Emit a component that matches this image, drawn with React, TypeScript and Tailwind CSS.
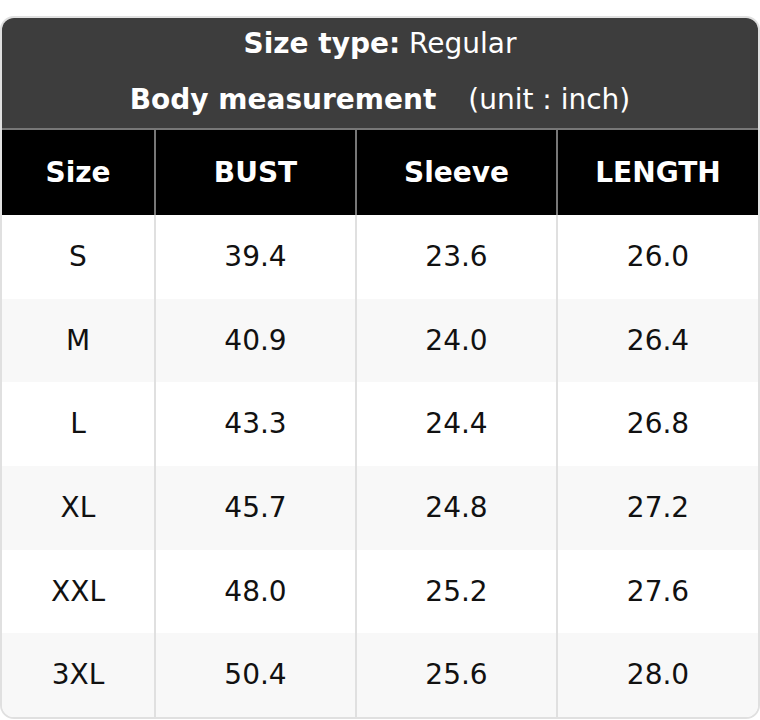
import React from "react";

const rows = [
  ["S", "39.4", "23.6", "26.0"],
  ["M", "40.9", "24.0", "26.4"],
  ["L", "43.3", "24.4", "26.8"],
  ["XL", "45.7", "24.8", "27.2"],
  ["XXL", "48.0", "25.2", "27.6"],
  ["3XL", "50.4", "25.6", "28.0"],
];

export default function App() {
  return (
    <div
      className="w-[760px] h-[720px] bg-white pt-4"
      style={{ fontFamily: '"DejaVu Sans", Verdana, sans-serif' }}
    >
      <div className="h-[703px] rounded-[14px] overflow-hidden border-2 border-[#e0e0e0] flex flex-col">
        <div className="bg-[#3d3d3d] text-white text-[28px] h-[112px] flex flex-col items-center border-b-2 border-[#777]">
          <div className="mt-[10px] leading-[32px]">
            <span className="font-bold">Size type:</span> Regular
          </div>
          <div className="mt-[24px] leading-[32px]">
            <span className="font-bold">Body measurement</span>
            <span className="ml-[32px]">(unit : inch)</span>
          </div>
        </div>
        <div className="flex h-[85px] bg-black text-white font-bold text-[28px]">
          <div className="w-[154px] flex items-center justify-center border-r-2 border-[#777]">Size</div>
          <div className="w-[201px] flex items-center justify-center border-r-2 border-[#777]">BUST</div>
          <div className="w-[201px] flex items-center justify-center border-r-2 border-[#777]">Sleeve</div>
          <div className="flex-1 flex items-center justify-center">LENGTH</div>
        </div>
        {rows.map((r, i) => (
          <div
            key={r[0]}
            className={`flex flex-1 text-[28px] text-[#111] ${i % 2 === 1 ? "bg-[#f8f8f8]" : "bg-white"}`}
          >
            <div className="w-[154px] flex items-center justify-center border-r-2 border-[#e0e0e0]">{r[0]}</div>
            <div className="w-[201px] flex items-center justify-center border-r-2 border-[#e0e0e0]">{r[1]}</div>
            <div className="w-[201px] flex items-center justify-center border-r-2 border-[#e0e0e0]">{r[2]}</div>
            <div className="flex-1 flex items-center justify-center">{r[3]}</div>
          </div>
        ))}
      </div>
    </div>
  );
}
